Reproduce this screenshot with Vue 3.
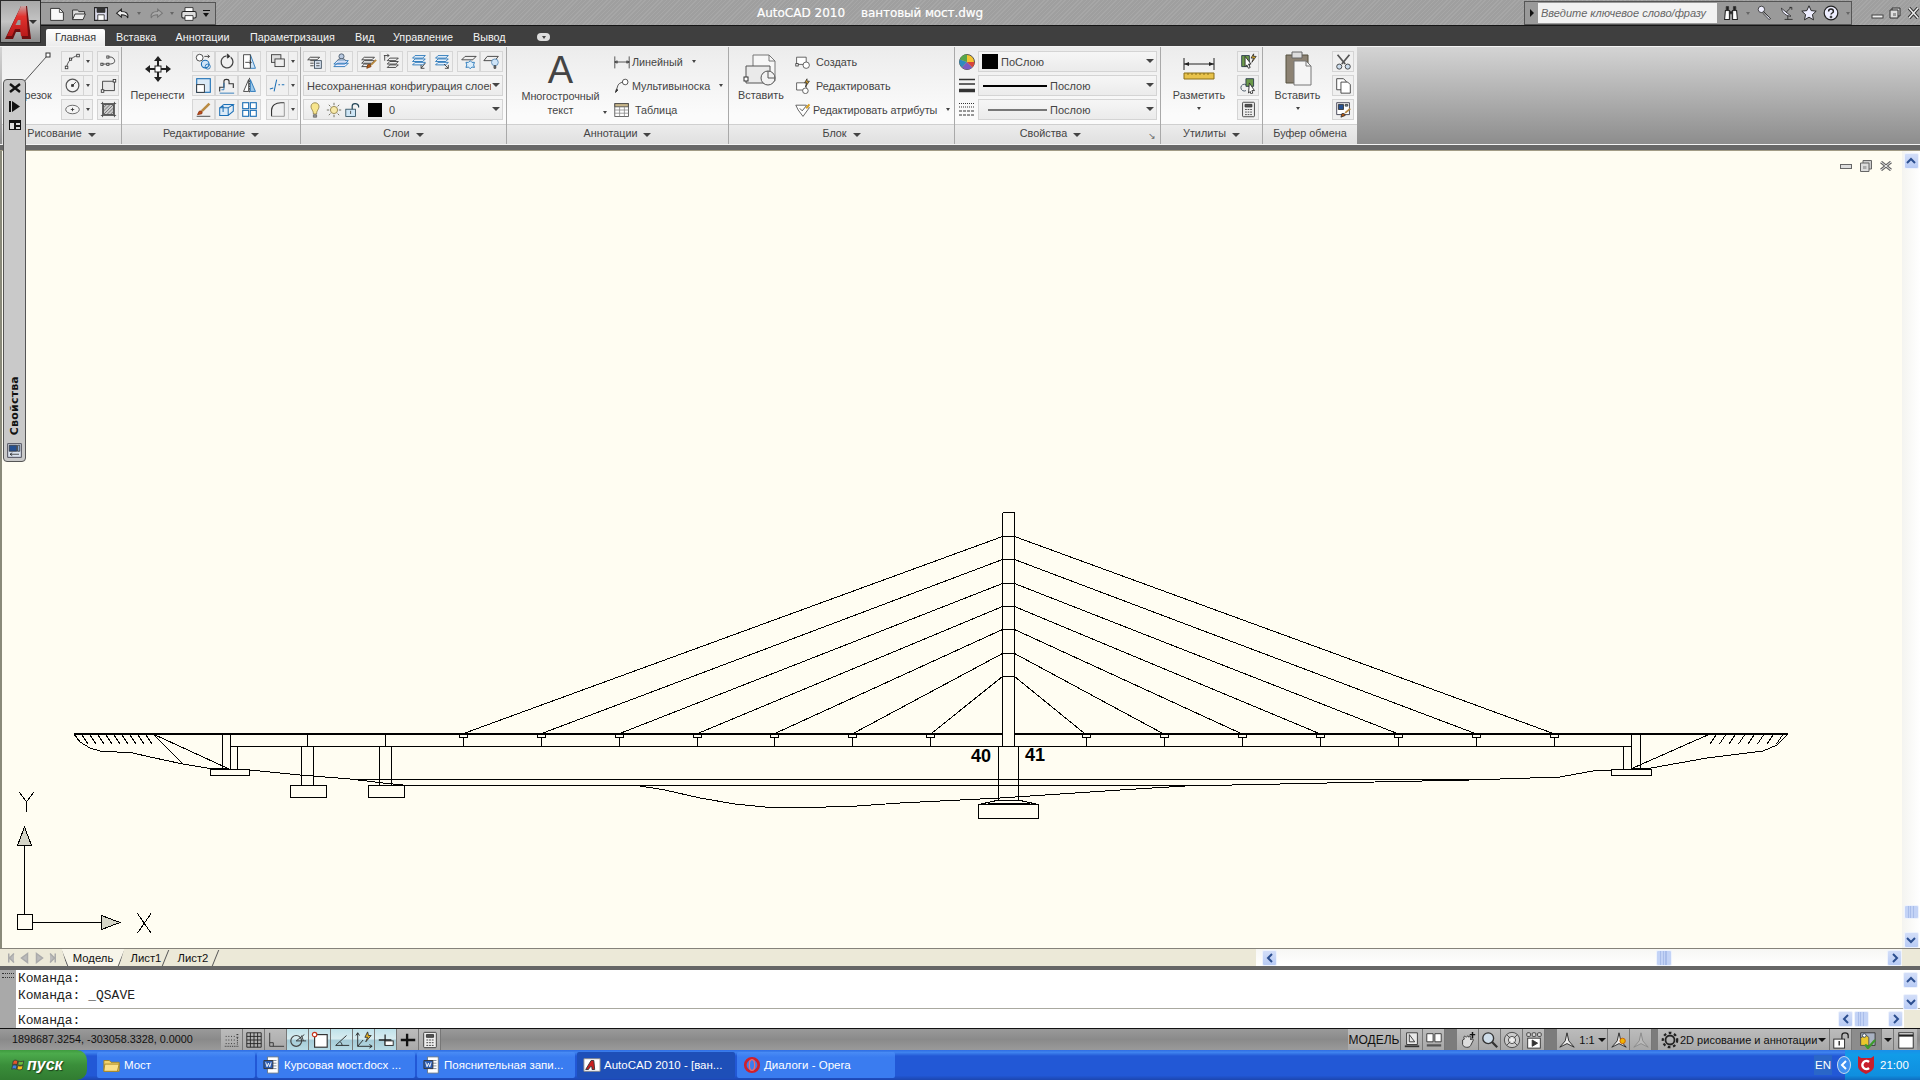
<script setup>
const D = {
  arc: '<path d="M3 17C4 10 9 5 16 3"/><rect x="1.5" y="15.5" width="3" height="3" fill="#fff"/><rect x="15" y="1.5" width="3" height="3" fill="#fff"/><rect x="6.5" y="6" width="2.5" height="2.5" fill="#fff"/>',
  circle: '<circle cx="10" cy="10" r="7.5" stroke="#555" stroke-width="1.4" fill="#f4f4f4"/><path d="M10 10l4-4"/><rect x="9" y="9" width="2" height="2" fill="#222"/>',
  ellipse: '<ellipse cx="10" cy="10" rx="8" ry="5" stroke="#555" fill="#f4f4f4"/><path d="M8 10h4M10 8v4"/>',
  pline: '<path d="M2 13h9c5 0 7-2 6-5s-5-4-8-3"/><rect x="1" y="12" width="2.5" height="2.5" fill="#fff"/><rect x="8" y="12" width="2.5" height="2.5" fill="#fff"/><rect x="8" y="3.5" width="2.5" height="2.5" fill="#fff"/>',
  rect: '<path d="M3 5h14v11H3z" fill="#e8e8e8"/><rect x="15.5" y="3" width="3" height="3" fill="#fff"/><rect x="1.5" y="15" width="3" height="3" fill="#fff"/>',
  hatch: '<path d="M4 4h12v12H4z" fill="#ccc"/><path d="M4 8l4-4M4 12l8-8M4 16L16 4M8 16l8-8M12 16l4-4" stroke="#666"/><path d="M1 3h18M1 17h18M3 1v18M17 1v18" stroke="#444"/>',
  copy: '<circle cx="5.5" cy="5.5" r="4" fill="#fff"/><circle cx="12" cy="13" r="4.5" fill="#cfe4f7" stroke="#1c6fb5" stroke-width="1.3"/><circle cx="15" cy="16" r="3" stroke="#1c6fb5"/><path d="M11 4h6l-2-2M17 4l-2 2"/>',
  rot: '<path d="M15 5a7 7 0 1 1-5-1.5" stroke-width="1.5" stroke="#444"/><path d="M11 1v5l3-2z" fill="#222"/>',
  trim: '<path d="M11 2l6 16h-6z" fill="#cfe4f7" stroke="#1c6fb5"/><path d="M3 2h8v16H3z" fill="#fff"/><path d="M5 11h7M10 9l2 2-2 2"/>',
  scale: '<rect x="2" y="2" width="16" height="16" fill="#dbeaf7" stroke="#1c6fb5" stroke-width="1.3"/><rect x="2" y="9" width="9" height="9" fill="#fff" stroke="#222"/>',
  stretch: '<path d="M2 17v-5h5V5c0-3 6-3 6 0v3h5v5" stroke-width="1.3"/><path d="M2 19h17" stroke="#1c6fb5"/><path d="M4 15h3V7" stroke="#1c6fb5"/>',
  mirror: '<path d="M9 3L3 17h6z" fill="#fff"/><path d="M11 3l6 14h-6z" fill="#9cc8ea" stroke="#1c6fb5"/><path d="M10 1v18" stroke-dasharray="2 1"/>',
  brush: '<path d="M2 18h16" stroke="#333"/><path d="M17 3L8 12" stroke="#b98a42" stroke-width="3"/><path d="M5 12c3-1 4 1 3 3l-5 1z" fill="#c24f17" stroke="#8a3010"/>',
  box: '<path d="M2 8h10v9H2zM2 8l5-4h11l-6 4M12 17l6-5V4M6 4v9" stroke="#1c6fb5" stroke-width="1.2" fill="#dbeaf7"/>',
  array: '<rect x="2" y="2" width="7" height="7" stroke="#1c6fb5" stroke-width="1.3" fill="#fff"/><rect x="11" y="2" width="7" height="7" stroke="#1c6fb5" stroke-width="1.3" fill="#fff"/><rect x="2" y="11" width="7" height="7" stroke="#1c6fb5" stroke-width="1.3" fill="#fff"/><rect x="11" y="11" width="7" height="7" stroke="#1c6fb5" stroke-width="1.3" fill="#fff"/>',
  stack: '<rect x="3" y="2" width="11" height="9" fill="#ddd"/><rect x="7" y="7" width="11" height="9" fill="#eee"/>',
  brk: '<path d="M1 14l4-1M6 17L9 3" stroke="#1c6fb5" stroke-width="1.2"/><path d="M11 9h2M15 9h3" stroke="#1c6fb5" stroke-width="1.2"/>',
  fillet: '<path d="M3 18V11C3 5 8 2 14 2h4" stroke-width="1.3"/><path d="M3 18h15V2" stroke="#888"/>',
  lay1: '<path d="M5 5h11l-3 3H2zM5 9h8M5 12h4M5 15h4"/><rect x="10" y="9" width="8" height="9" fill="#dbe6f4" stroke="#345"/><path d="M12 12h4M12 15h4"/>',
  lay2: '<path d="M5 12h13l-4 4H1zM5 9h13l-4 4H1z" stroke="#1c6fb5" fill="#eef"/><circle cx="10" cy="4" r="3" fill="#b8c8e0" stroke="#456"/><path d="M5 9c1-3 9-3 10 0" stroke="#456" fill="#b8c8e0"/>',
  lay3: '<path d="M5 5h12l-3 3H2zM5 9h12l-3 3H2zM5 13h8l-3 3H2z"/><path d="M19 8l-6 6" stroke="#b98a42" stroke-width="2.2"/><path d="M9 14c2-1 4 0 4 2l-5 2z" fill="#b85a12" stroke="#7a3a08"/>',
  lay4: '<path d="M8 6h10l-3 3H5zM8 10h10l-3 3H5zM8 14h10l-3 3H5z"/><path d="M1 3h6l-2-2M7 3L5 5"/><path d="M2 3v6"/>',
  lay5: '<path d="M6 3h12l-3 3H3zM6 7h12l-3 3H3z" stroke="#1c6fb5" fill="#e8f1fb"/><path d="M6 11h12l-3 3H3z" stroke="#1c6fb5" fill="#e8f1fb"/><path d="M18 12l-5 6M13 14v4h4"/>',
  lay6: '<path d="M6 3h12l-3 3H3zM6 7h12l-3 3H3zM6 11h12l-3 3H3z" stroke="#1c6fb5" fill="#e8f1fb"/><path d="M13 13l5 5M18 14v4h-4"/>',
  lay7: '<path d="M6 4h13l-4 4H2z"/><path d="M12 9l2 2h3l-1 3 1 3-3-.5-2 2-2-2-3 .5 1-3-1-3h3z" fill="#dceefb" stroke="#1c6fb5"/>',
  lay8: '<path d="M5 4h13l-4 5H1z"/><circle cx="14" cy="11" r="4" fill="#cfe4f7" stroke="#5a8ab5"/><path d="M13 15h2v3h-2z" fill="#999"/>',
  bulb: '<path d="M10 1C5 1 4 6 6 9c1 2 2 3 2 6h4c0-3 1-4 2-6 2-3 1-8-4-8z" fill="#f7e58d" stroke="#8a7a40"/><path d="M8 16h4v3H8z" fill="#999" stroke="#666"/>',
  sun: '<circle cx="10" cy="10" r="4.5" fill="#f7e9a8" stroke="#8a7a40"/><path d="M10 1v3M10 16v3M1 10h3M16 10h3M3.5 3.5l2 2M14.5 14.5l2 2M3.5 16.5l2-2M14.5 5.5l2-2" stroke="#554"/>',
  lockb: '<rect x="1" y="9" width="12" height="9" fill="#cfe6f5" stroke="#245"/><path d="M7 11v4"/><path d="M9 9V5c0-4 7-4 8 0v2" stroke="#245" stroke-width="1.5"/>',
  bind: '<path d="M3 7h5v11H2zM12 7h5l1 11h-6z" fill="#fff" stroke="#222" stroke-width="1.3"/><path d="M4 2h3v5H4zM13 2h3v5h-3zM8 8h4v3H8z" fill="#222"/>',
  key: '<circle cx="5.5" cy="5.5" r="4" fill="#eef" stroke="#222"/><path d="M8 8l9 9M17 17l-2 1-8-8" stroke="#222" fill="#eef"/>',
  dish: '<path d="M3 4c1 6 6 10 12 10z" fill="#eef" stroke="#222"/><path d="M9 9l6-6M13 3h3v3M7 18h10M11 13v5" stroke="#222"/>',
  star: '<path d="M10 1l2.7 6 6.3.7-4.7 4.3 1.3 6.5L10 15.2 4.4 18.5 5.7 12 1 7.7 7.3 7z" fill="#eef" stroke="#222" stroke-width="1.2"/>',
  help: '<circle cx="10" cy="10" r="8.5" fill="#eef" stroke="#222" stroke-width="1.5"/><path d="M7 8c0-4 6-4 6 0 0 2-3 2-3 4" stroke="#222" stroke-width="1.8"/><path d="M9 14h2v2H9z" fill="#222"/>',
  newf: '<path d="M2 3h11l5 5v10H2z" fill="#f8f8f8" stroke="#333" stroke-width="1.2"/><path d="M13 3v5h5" stroke="#333"/>',
  open: '<path d="M2 17V5h6l2 2h7v3" fill="#ddd" stroke="#333" stroke-width="1.2"/><path d="M2 17l3-7h13l-3 7z" fill="#eee" stroke="#333" stroke-width="1.2"/>',
  save: '<path d="M2 2h16v16H2z" fill="#dde" stroke="#222" stroke-width="1.4"/><path d="M5 2h10v6H5z" fill="#333"/><path d="M6 11h8v7H6z" fill="#fff" stroke="#222"/>',
  undo: '<path d="M8 4L2 9l6 5v-3c5 0 7 1 8 4 1-6-2-8-8-8z" fill="#eee" stroke="#222" stroke-width="1.3"/>',
  redo: '<path d="M12 4l6 5-6 5v-3c-5 0-7 1-8 4-1-6 2-8 8-8z" fill="#aaa" stroke="#777" stroke-width="1.3"/>',
  print: '<path d="M5 2h10v5H5z" fill="#fff" stroke="#222"/><rect x="1" y="7" width="18" height="8" rx="2" fill="#ddd" stroke="#222" stroke-width="1.3"/><path d="M5 12h10v6H5z" fill="#fff" stroke="#222"/>',
  ic1: '<path d="M2 3h9v13H2z" fill="#6c9a4a" stroke="#234"/><path d="M6 4l7 9-3 0 2 4-2 1-2-4-2 2z" fill="#fff" stroke="#222"/><path d="M16 1l-3 5h3l-2 5 5-7h-3z" fill="#e7b321"/>',
  ic2: '<path d="M7 2h9v9H7z" fill="#6c9a4a" stroke="#234"/><path d="M7 9a4 4 0 1 0 0 7" stroke="#345"/><path d="M11 7l6 9-3 0 1 3-2 1-1-3-2 2z" fill="#fff" stroke="#222"/>',
  calc: '<rect x="3" y="1.5" width="14" height="17" rx="1" fill="#eee" stroke="#333"/><path d="M6 4h8v3H6z" fill="#555"/><path d="M6 10h2M9 10h2M12 10h2M6 13h2M9 13h2M12 13h2M6 16h2M9 16h2M12 16h2" stroke="#333"/>',
  cut: '<path d="M3 2l9 11M17 2L8 13" stroke="#555" stroke-width="2"/><circle cx="5" cy="16" r="3" fill="#cde" stroke="#333"/><circle cx="15" cy="16" r="3" fill="#cde" stroke="#333"/>',
  cp: '<path d="M2 2h8l3 3v10H2z" fill="#fff" stroke="#333"/><path d="M7 6h8l3 3v10H7z" fill="#fff" stroke="#333"/>',
  pasted: '<path d="M2 2h15v14H2z" fill="#fff" stroke="#334"/><path d="M4 4h6v6H4z" fill="#244f90"/><path d="M12 4h3v2h-3z" fill="#8ab"/><path d="M18 9l-6 5" stroke="#b98a42" stroke-width="2.2"/><path d="M8 15c2-1 4 0 4 2l-5 2z" fill="#b85a12"/>',
  ssnap: '<path d="M3 6h1M6 6h1M9 6h1M12 6h1M3 10h1M6 10h1M9 10h1M12 10h1M3 14h1M6 14h1M9 14h1M12 14h1M15 4h2M15 7h2" stroke="#222"/><path d="M16 8v8M2 17h15" stroke="#222" stroke-dasharray="1 1"/>',
  sgrid: '<path d="M2 2h16v16H2zM2 6h16M2 10h16M2 14h16M6 2v16M10 2v16M14 2v16" stroke="#222"/>',
  sortho: '<path d="M3 2v15h16" stroke="#333"/><path d="M3 13h4v4" stroke="#333"/>',
  spolar: '<circle cx="8" cy="11" r="6" stroke="#444" stroke-width="1.3"/><path d="M8 11l9-7M8 11h11M14 5l2 6" stroke="#333"/>',
  sosnap: '<rect x="4" y="4" width="14" height="14" fill="#fff" stroke="#333" stroke-width="1.3"/><circle cx="4" cy="4" r="2.5" fill="#fff" stroke="#c8341b" stroke-width="1.3"/>',
  sotrack: '<path d="M3 16h15M3 16L15 5M10 16c0-2-1-3-2-4" stroke="#222"/>',
  sducs: '<path d="M3 2v15h16M1 5l2-3 2 3M16 15l3 2-3 2M3 17l6-7" stroke="#222"/><path d="M14 1l-3 6h3l-2 5 6-7h-3z" fill="#e7b321"/>',
  sdyn: '<path d="M2 10h14M9 4v12" stroke="#222" stroke-width="1.4"/><rect x="9" y="11" width="9" height="5" fill="#fff" stroke="#222"/>',
  slwt: '<path d="M2 10h16M9 3v14" stroke="#111" stroke-width="2.6"/>',
  spaper: '<path d="M4 2h12v13H4z" fill="#e8e8e8"/><path d="M7 12V4l6 8z"/><path d="M2 17h16" stroke-width="2"/>',
  sviews: '<path d="M2 3h7v9H2zM11 3h7v9h-7z" fill="#fff"/><path d="M2 16h16" stroke-width="2.5" stroke="#555"/>',
  span2: '<path d="M4 10v5c1 4 8 4 9 1l3-6c0-2-3-1-3 0V7c0-2-2-2-2 0 0-2-2-2-3 0l-1-1C5 5 5 8 6 9z" fill="#ddd" stroke="#333"/><path d="M15 1v7M12 4h6" stroke="#111" stroke-width="1.6"/>',
  szoom: '<circle cx="8" cy="8" r="6" fill="#cfdde9" stroke="#333" stroke-width="1.5"/><path d="M12 12l6 6" stroke="#333" stroke-width="2.5"/>',
  swheel: '<circle cx="10" cy="10" r="8.5" fill="#ccc" stroke="#444"/><circle cx="10" cy="10" r="4" fill="#eee" stroke="#444"/><path d="M4 4l4 4M16 4l-4 4M4 16l4-4M16 16l-4-4" stroke="#444"/>',
  sshow: '<rect x="2" y="2" width="4" height="4" rx="1" fill="#ddd" stroke="#333"/><rect x="8" y="2" width="4" height="4" rx="1" fill="#ddd" stroke="#333"/><rect x="14" y="2" width="4" height="4" rx="1" fill="#ddd" stroke="#333"/><rect x="3" y="8" width="14" height="11" fill="#fff" stroke="#333"/><path d="M8 10l6 3.5-6 3.5z" fill="#333"/>',
  sanno: '<path d="M10 2l2 9 6 7-8-4-8 4 6-7z" fill="#eee" stroke="#222"/>',
  sanno2: '<path d="M10 2l2 9 6 7-8-4-8 4 6-7z" fill="#eee" stroke="#222"/><circle cx="14" cy="11" r="3" fill="#f0b400" stroke="#c75c00"/>',
  sanno3: '<path d="M10 2l2 9 6 7-8-4-8 4 6-7z" fill="#bbb" stroke="#888"/>',
  gear: '<circle cx="10" cy="10" r="5" fill="none" stroke="#222" stroke-width="2"/><circle cx="10" cy="10" r="8" fill="none" stroke="#222" stroke-width="2.5" stroke-dasharray="3 3"/>',
  lock2: '<rect x="2" y="9" width="12" height="10" fill="#fff" stroke="#222"/><path d="M8 11v5" stroke="#222" stroke-width="1.5"/><path d="M11 9V5c0-4 7-4 7 0v3" stroke="#222" stroke-width="1.4"/>',
  cui: '<path d="M3 2h16v14H3z" fill="#a9b2c2"/><path d="M3 8l5-4 4 3v9H3z" fill="#eac72c" stroke="#555"/><path d="M8 15l3 4 8-9" stroke="#3d9a2c" stroke-width="2.5"/><circle cx="7" cy="5" r="2" fill="#fff" stroke="#345"/>',
  win: '<rect x="2" y="2" width="16" height="17" fill="#fff" stroke="#222"/><path d="M2 5h16" stroke="#222" stroke-width="2.5"/>',
  folder: '<path d="M1 5h6l2 2h9v10H1z" fill="#f3d36b" stroke="#a58320"/><path d="M2 9h16l-2 8H1z" fill="#fbe08a" stroke="#a58320"/>',
  word: '<path d="M5 1h12v18H5z" fill="#fff" stroke="#678"/><path d="M8 5h7M8 8h7M8 11h7M8 14h7" stroke="#789"/><path d="M1 5h10v9H1z" fill="#2b5cb0"/><path d="M3 7l1.5 5L6 8l1.5 4L9 7" stroke="#fff"/>',
  acad: '<path d="M1 3h18v14H1z" fill="#fff" stroke="#888"/><path d="M3 15L9 5h3l1 10h-3v-3H8l-2 3z" fill="#c91f1f"/>',
  opera: '<circle cx="10" cy="10" r="7.5" fill="none" stroke="#d0202b" stroke-width="3"/><ellipse cx="10" cy="10" rx="3" ry="6" fill="none" stroke="#f06a6a" stroke-width="1.5"/>',
  flag: '<path d="M3 4c3-2 4-1 6 0l-1 5c-2-1-4-1-6 0z" fill="#e8562a"/><path d="M10 4c2 1 4 1 7 0l-1 5c-3 1-5 1-7 0z" fill="#6cbb3c"/><path d="M2 10c2-1 4-1 6 0l-1 5c-2-1-4-1-6 0z" fill="#3f83e0"/><path d="M9 10c2 1 4 1 7 0l-1 5c-3 1-5 1-7 0z" fill="#f5c21f"/>',
  propb: '<rect x="1" y="1" width="18" height="18" fill="#dbe3ee" stroke="#223"/><path d="M3 3h10v8H3z" fill="#244f90"/><path d="M14 3h3v8h-3z" fill="#88a8d0"/><path d="M4 15h12M4 15l3-2M4 15l3 2" stroke="#222"/>'
}

const drawCol1 = ['arc', 'circle', 'ellipse']
const drawCol2 = ['pline', 'rect', 'hatch']
const editGrid = ['copy', 'rot', 'trim', 'scale', 'stretch', 'mirror', 'brush', 'box', 'array']
const editSplit = ['stack', 'brk', 'fillet']
const layerGroups = [['lay1'], ['lay2'], ['lay3', 'lay4'], ['lay5', 'lay6'], ['lay7', 'lay8']]
const annotRows = [
  { t: 'Линейный', dd: true, i: '<path d="M1 3v15M19 3v15M1 10h18M1 10l3-1.5v3zM19 10l-3-1.5v3z" stroke="#333"/>' },
  { t: 'Мультивыноска', dd: true, i: '<path d="M2 18l3-9c1-2 3-3 6-4" stroke="#333"/><circle cx="14" cy="5" r="3.5" fill="#fff" stroke="#333"/><path d="M2 18l1-4 2 1z" fill="#333"/>' },
  { t: 'Таблица', dd: false, wide: true, i: '<rect x="1" y="2" width="17" height="16" fill="#fff" stroke="#444"/><path d="M1 2h17v4H1z" fill="#c8b68a" stroke="#444"/><path d="M1 10h17M1 14h17M7 6v12M13 6v12" stroke="#888"/>' }
]
const blockRows = [
  { t: 'Создать', dd: false, wide: true, i: '<path d="M2 4h12v9H2z" fill="#fff" stroke="#444"/><rect x="1" y="12" width="3" height="3" fill="#fff" stroke="#333"/><circle cx="14" cy="14" r="4" fill="#fff" stroke="#444"/>' },
  { t: 'Редактировать', dd: false, wide: true, i: '<path d="M2 6h12v9H2z" fill="#fff" stroke="#444"/><circle cx="13" cy="16" r="3.5" fill="#fff" stroke="#444"/><path d="M15 1l-3 5h3l-2 5 5-7h-3z" fill="#e7a921"/>' },
  { t: 'Редактировать атрибуты', dd: true, i: '<path d="M1 4h13l4 3-8 11-6-8z" fill="#fff" stroke="#444"/><path d="M6 8l3 3 5-6" stroke="#333"/><path d="M18 3l-4 5" stroke="#d8a020" stroke-width="2.5"/>' }
]

const statusLeft = [
  ['ssnap', false], ['sgrid', false], ['sortho', false], ['spolar', true], ['sosnap', true],
  ['sotrack', true], ['sducs', true], ['sdyn', true], ['slwt', false], ['calc', false]
]
const navBtn = ['M9 3v12M16 3l-6 6 6 6', 'M14 3L6 9l8 6z', 'M6 3l8 6-8 6z', 'M4 3l6 6-6 6M11 3v12']
const tasks = [
  { t: 'Мост', i: 'folder' },
  { t: 'Курсовая мост.docx ...', i: 'word' },
  { t: 'Пояснительная запи...', i: 'word' },
  { t: 'AutoCAD 2010 - [ван...', i: 'acad', on: true },
  { t: 'Диалоги - Opera', i: 'opera' }
]

/* Drawing */
const towerL = 1002.5, towerR = 1014.5
const levels = [536.5, 559.5, 583.5, 606.5, 629.5, 653.5, 676.5]
const leftA = [463, 541, 619, 697, 774, 852, 930]
const rightA = [1554, 1476, 1398, 1320, 1242, 1164, 1086]
const cables = []
levels.forEach((y, i) => {
  cables.push([towerL, y, leftA[i] + 2, 733])
  cables.push([towerR, y, rightA[i] - 2, 733])
})
const anchors = [...leftA, ...rightA]
const hatchL = Array.from({ length: 9 }, (_, i) => 82 + i * 8)
const hatchR = Array.from({ length: 8 }, (_, i) => 1710 + i * 9.5)
const ground = [
  [74, 734], [80, 742], [90, 748], [100, 751], [133, 753], [150, 757], [183, 764], [207, 768], [250, 770],
  [300, 775], [350, 779], [383, 783], [403, 785], [640, 786], [665, 790], [700, 798], [735, 804], [765, 807], [796, 808], [857, 806],
  [900, 803], [1000, 798], [1120, 790], [1185, 786], [1470, 780], [1560, 777], [1593, 771], [1651, 768],
  [1707, 758], [1763, 751], [1777, 745], [1788, 734]
].map(p => p.join(',')).join(' ')
</script>

<template>
  <div class="app">
    <div class="appbtn">
      <svg width="34" height="36" viewBox="0 0 34 36">
        <defs>
          <linearGradient id="logoA" x1="0" y1="0" x2="0" y2="1">
            <stop offset="0" stop-color="#c9a3a3" />
            <stop offset=".35" stop-color="#e2322e" />
            <stop offset="1" stop-color="#b81a1a" />
          </linearGradient>
        </defs>
        <path d="M1 35L17 2h6l4 33h-9l-1-7h-5l-3 7z" fill="#6e0e0f" />
        <path d="M3 32L17 2h5l2 30h-7l-1-7h-5l-3 7z" fill="url(#logoA)" />
        <path d="M14 16h2.500v5H11.500z" fill="#9a9a9a" />
      </svg>
      <i class="tri white appcaret"></i>
    </div>

    <header class="titlebar">
      <div class="qat">
        <svg class="ic q" viewBox="0 0 20 20" v-html="D.newf"></svg>
        <svg class="ic q" viewBox="0 0 20 20" v-html="D.open"></svg>
        <svg class="ic q" viewBox="0 0 20 20" v-html="D.save"></svg>
        <svg class="ic q" viewBox="0 0 20 20" v-html="D.undo"></svg><i class="tri small g"></i>
        <svg class="ic q" viewBox="0 0 20 20" v-html="D.redo"></svg><i class="tri small g"></i>
        <svg class="ic q" viewBox="0 0 20 20" v-html="D.print"></svg>
        <span class="qmore"></span>
      </div>
      <div class="title"><span>AutoCAD 2010</span><span>вантовый мост.dwg</span></div>
      <div class="search">
        <i class="tri-r"></i>
        <div class="input">Введите ключевое слово/фразу</div>
        <svg class="ic s" viewBox="0 0 20 20" v-html="D.bind"></svg><i class="tri small g"></i>
        <svg class="ic s" viewBox="0 0 20 20" v-html="D.key"></svg>
        <svg class="ic s" viewBox="0 0 20 20" v-html="D.dish"></svg>
        <svg class="ic s" viewBox="0 0 20 20" v-html="D.star"></svg>
        <svg class="ic s" viewBox="0 0 20 20" v-html="D.help"></svg><i class="tri small g"></i>
      </div>
      <div class="winbtns">
        <svg class="wmin" width="14" height="12" viewBox="0 0 14 12"><rect x="1" y="8" width="11" height="3" fill="#eee" stroke="#444" /></svg>
        <svg width="12" height="12" viewBox="0 0 12 12"><path d="M3 1h8v8H3z" fill="#ccc" stroke="#333" /><path d="M1 3h8v8H1z" fill="#ddd" stroke="#333" /><path d="M4 6h3v3H4z" fill="#999" /></svg>
        <svg width="11" height="12" viewBox="0 0 11 12"><path d="M1 1l9 10M10 1L1 11" stroke="#333" stroke-width="3.5" /><path d="M1 1l9 10M10 1L1 11" stroke="#eee" stroke-width="1.5" /></svg>
      </div>
    </header>

    <nav class="tabs">
      <span class="tab on">Главная</span>
      <span class="tab t1">Вставка</span>
      <span class="tab t2">Аннотации</span>
      <span class="tab t3">Параметризация</span>
      <span class="tab t4">Вид</span>
      <span class="tab t5">Управление</span>
      <span class="tab t6">Вывод</span>
      <span class="pill"><i class="tri small d"></i></span>
    </nav>

    <section class="ribbon">
      <div class="panel p1">
        <div class="body">
          <div class="big w58">
            <svg class="bigicon" width="58" height="38" viewBox="0 0 58 38">
              <path d="M20 32L44 5" stroke="#555" fill="none" />
              <rect x="43" y="2" width="4" height="4" fill="#fff" stroke="#333" />
            </svg>
            <span class="biglabel">Отрезок</span>
          </div>
          <div class="col">
            <span v-for="c in drawCol1" :key="c" class="split">
              <span class="ib"><svg class="ic" viewBox="0 0 20 20" v-html="D[c]"></svg></span>
              <span class="ar"><i class="tri small d"></i></span>
            </span>
          </div>
          <div class="col ml4">
            <span v-for="c in drawCol2" :key="c" class="ib solo"><svg class="ic" viewBox="0 0 20 20" v-html="D[c]"></svg></span>
          </div>
        </div>
        <div class="ptitle">Рисование <i class="tri d"></i></div>
      </div>

      <div class="panel p2">
        <div class="body">
          <div class="big w70">
            <svg class="bigicon" width="40" height="38" viewBox="0 2 40 38">
              <path d="M20 7l-4 5h3v5h2v-5h3zM20 33l-4-5h3v-5h2v5h3zM7 20l5-4v3h5v2h-5v3zM33 20l-5-4v3h-5v2h5v3z" fill="#222" />
              <rect x="17" y="17" width="6" height="6" fill="#fff" stroke="#222" />
            </svg>
            <span class="biglabel">Перенести</span>
          </div>
          <div class="g3">
            <span v-for="n in editGrid" :key="n" class="ib flat"><svg class="ic" viewBox="0 0 20 20" v-html="D[n]"></svg></span>
          </div>
          <div class="col ml4">
            <span v-for="n in editSplit" :key="n" class="split">
              <span class="ib"><svg class="ic" viewBox="0 0 20 20" v-html="D[n]"></svg></span>
              <span class="ar"><i class="tri small d"></i></span>
            </span>
          </div>
        </div>
        <div class="ptitle">Редактирование <i class="tri d"></i></div>
      </div>

      <div class="panel p3">
        <div class="body stack">
          <div class="lrow">
            <span v-for="(g, i) in layerGroups" :key="i" class="lgrp">
              <span v-for="n in g" :key="n" class="ib lay"><svg class="ic" viewBox="0 0 20 20" v-html="D[n]"></svg></span>
            </span>
          </div>
          <div class="combo w200"><span class="ctext">Несохраненная конфигурация слоев</span><i class="tri d"></i></div>
          <div class="combo w200">
            <svg class="ic s16" viewBox="0 0 20 20" v-html="D.bulb"></svg>
            <svg class="ic s16" viewBox="0 0 20 20" v-html="D.sun"></svg>
            <svg class="ic s16" viewBox="0 0 20 20" v-html="D.lockb"></svg>
            <span class="swatch sm"></span>
            <span class="ctext z">0</span>
            <i class="tri d"></i>
          </div>
        </div>
        <div class="ptitle">Слои <i class="tri d"></i></div>
      </div>

      <div class="panel p4">
        <div class="body">
          <div class="big w106">
            <span class="biga">A</span>
            <span class="biglabel two">Многострочный<br />текст</span>
            <i class="tri small d mt-a"></i>
          </div>
          <div class="rows">
            <div v-for="r in annotRows" :key="r.t" class="trow" :class="{ wide: r.wide }">
              <svg class="ic s16" viewBox="0 0 20 20" v-html="r.i"></svg>
              <span>{{ r.t }}</span><i v-if="r.dd" class="tri small d gap8"></i>
            </div>
          </div>
        </div>
        <div class="ptitle">Аннотации <i class="tri d"></i></div>
      </div>

      <div class="panel p5">
        <div class="body">
          <div class="big w64">
            <svg class="bigicon" width="36" height="38" viewBox="0 0 36 38">
              <path d="M10 4h16l6 6v20H10z" fill="#f7f7f7" stroke="#777" />
              <path d="M26 4v6h6" fill="none" stroke="#777" />
              <path d="M3 15h24v17H3z" fill="#eaeaea" stroke="#555" />
              <rect x="1" y="26" width="4" height="4" fill="#fff" stroke="#333" />
              <circle cx="25" cy="27" r="7" fill="#f2f2f2" stroke="#555" />
              <path d="M25 20v7h7" fill="none" stroke="#555" />
            </svg>
            <span class="biglabel">Вставить</span>
          </div>
          <div class="rows ml2">
            <div v-for="r in blockRows" :key="r.t" class="trow" :class="{ wide: r.wide }">
              <svg class="ic s16" viewBox="0 0 20 20" v-html="r.i"></svg>
              <span>{{ r.t }}</span><i v-if="r.dd" class="tri small d gap8"></i>
            </div>
          </div>
        </div>
        <div class="ptitle">Блок <i class="tri d"></i></div>
      </div>

      <div class="panel p6">
        <div class="body stack">
          <div class="prow">
            <svg class="wheel" width="16" height="16" viewBox="0 0 16 16">
              <circle cx="8" cy="8" r="7.5" fill="#f4c430" stroke="#555" />
              <path d="M8 8V.5A7.5 7.5 0 0 0 .9 5.5z" fill="#57a64a" />
              <path d="M8 8L.9 5.5A7.5 7.5 0 0 0 3 13.6z" fill="#2d8bc0" />
              <path d="M8 8l-5 5.6a7.5 7.5 0 0 0 10.4-.3z" fill="#7a5bc2" />
              <path d="M8 8l5.4 5.3A7.5 7.5 0 0 0 15.4 8z" fill="#d8453c" />
            </svg>
            <div class="combo w179"><span class="swatch"></span><span class="ctext t">ПоСлою</span><i class="tri d"></i></div>
          </div>
          <div class="prow">
            <svg class="wheel" width="16" height="16" viewBox="0 0 16 16"><path d="M0 1.5h16M0 6h16" stroke="#333" stroke-width="1.5" /><path d="M0 12.5h16" stroke="#333" stroke-width="3.5" /></svg>
            <div class="combo w179"><span class="lw black"></span><span class="ctext t">Послою</span><i class="tri d"></i></div>
          </div>
          <div class="prow">
            <svg class="wheel" width="16" height="16" viewBox="0 0 16 16"><path d="M0 1.5h16M0 5h16" stroke="#333" stroke-dasharray="1 1" /><path d="M0 9h16M0 13h16" stroke="#333" stroke-dasharray="3 1" /></svg>
            <div class="combo w179"><span class="lw graya"></span><span class="ctext t">Послою</span><i class="tri d"></i></div>
          </div>
        </div>
        <div class="ptitle pad24">Свойства <i class="tri d"></i><span class="launch">↘</span></div>
      </div>

      <div class="panel p7">
        <div class="body">
          <div class="big w76">
            <svg class="bigicon" width="34" height="38" viewBox="0 0 34 38">
              <path d="M2 7v12M32 7v12M2 13h30" stroke="#222" fill="none" />
              <path d="M2 13l5-2v4zM32 13l-5-2v4z" fill="#222" />
              <path d="M2 22h30v6H2z" fill="#e8c24a" stroke="#8a6f18" />
              <path d="M6 22v2M10 22v2M14 22v2M18 22v2M22 22v2M26 22v2" stroke="#8a6f18" />
            </svg>
            <span class="biglabel">Разметить</span>
            <i class="tri small d"></i>
          </div>
          <div class="col">
            <span v-for="n in ['ic1', 'ic2', 'calc']" :key="n" class="ib solo"><svg class="ic" viewBox="0 0 20 20" v-html="D[n]"></svg></span>
          </div>
        </div>
        <div class="ptitle">Утилиты <i class="tri d"></i></div>
      </div>

      <div class="panel p8">
        <div class="body">
          <div class="big w69">
            <svg class="bigicon" width="30" height="38" viewBox="0 0 30 38">
              <path d="M3 4h22v28H3z" fill="#8c8273" stroke="#55503f" />
              <path d="M9 1h10v6H9z" fill="#ddd" stroke="#666" />
              <path d="M11 10h12l5 5v19H11z" fill="#f5f5f5" stroke="#777" />
              <path d="M23 10v5h5" fill="none" stroke="#777" />
            </svg>
            <span class="biglabel">Вставить</span>
            <i class="tri small d"></i>
          </div>
          <div class="col">
            <span v-for="n in ['cut', 'cp', 'pasted']" :key="n" class="ib solo"><svg class="ic" viewBox="0 0 20 20" v-html="D[n]"></svg></span>
          </div>
        </div>
        <div class="ptitle plain">Буфер обмена</div>
      </div>
    </section>
    <div class="ribbon-sep"></div>

    <aside class="palette">
      <svg width="12" height="10" viewBox="0 0 12 10"><path d="M1 1l10 8M11 1L1 9" stroke="#111" stroke-width="2.4" /></svg>
      <svg width="11" height="11" viewBox="0 0 11 11"><path d="M0 0h2v11H0zM3 0l8 5.5L3 11z" fill="#111" /></svg>
      <svg width="12" height="10" viewBox="0 0 12 10"><path d="M0 0h12v10H0z" fill="#111" /><path d="M1 3h4v6H1zM7 3h4v2H7zM7 7h4v2H7z" fill="#ddd" /></svg>
      <span class="pal-grow"></span>
      <span class="pal-text">Свойства</span>
      <svg class="ic pal-ic" viewBox="0 0 20 20" v-html="D.propb"></svg>
    </aside>

    <main class="canvas">
      <div class="drawing">
        <svg class="dwg" width="1900" height="797" viewBox="2 151 1900 797" shape-rendering="crispEdges" fill="none" stroke="#000">
          <path d="M74 733.5H1002M1014 733.5H1788" stroke-width="2" />
          <path d="M230 746.5H1631" />
          <path d="M352 779.5H1470M403 785.5H1185" />
          <polyline :points="ground" />
          <path d="M1002.5 512.5H1014.5V746M1002.5 512.5V746" />
          <path v-for="y in levels" :key="y" :d="`M1002.5 ${y}H1014.5`" />
          <path d="M998.5 746V800M1018.5 746V800" />
          <rect x="978.5" y="804.5" width="60" height="14" />
          <path d="M981 804L999 800H1018L1036 804M988 803H1030" />
          <line v-for="(c, i) in cables" :key="i" :x1="c[0]" :y1="c[1]" :x2="c[2]" :y2="c[3]" />
          <g v-for="x in anchors" :key="x">
            <rect :x="x - 3.5" y="734.5" width="8" height="3" />
            <path :d="`M${x + 0.5} 737V746`" />
          </g>
          <path d="M222.5 734V769M230.5 734V769M237.5 746V769" />
          <rect x="210.5" y="769.5" width="39" height="6" />
          <path d="M307.5 734V746M301.5 746V785M313.5 746V785" />
          <rect x="290.5" y="785.5" width="36" height="12" />
          <path d="M385.5 734V746M379.5 746V785M391.5 746V785" />
          <rect x="368.5" y="785.5" width="36" height="12" />
          <path d="M1631.5 734V769M1640.5 734V769M1623.5 746V769" />
          <rect x="1611.5" y="769.5" width="40" height="6" />
          <path d="M153 734L227 768M153 734L183 764M1710 734L1633 768" />
          <path v-for="x in hatchL" :key="x" :d="`M${x} 735l6 9`" />
          <path v-for="x in hatchR" :key="x" :d="`M${x + 6} 735l-6 9`" />
          <rect x="17.5" y="914.5" width="15" height="15" />
          <path d="M33 922.5H101M24.5 914V845" />
          <path d="M101.5 915.5L120 922.5L101.5 929.5Z" fill="#d5d5c8" />
          <path d="M17.5 845.5L24.5 827L31.5 845.5Z" fill="#d5d5c8" />
          <path d="M19.5 792.5L26.5 802L33.5 792.5M26.5 802V812M137.5 913.5L151 933M151 913.5L137.5 933" />
          <text x="971" y="762" class="pier-no" stroke="none" fill="#000">40</text>
          <text x="1025" y="761" class="pier-no" stroke="none" fill="#000">41</text>
        </svg>
        <div class="vpbtns">
          <svg width="12" height="7" viewBox="0 0 12 7"><rect x=".5" y="1.5" width="11" height="4" fill="#ddd" stroke="#666" /></svg>
          <svg width="12" height="12" viewBox="0 0 12 12"><path d="M3 .5h8.5V9H3z" fill="#ccc" stroke="#666" /><path d="M.5 3H9v8.5H.5z" fill="#ddd" stroke="#666" /><path d="M3 6h3.5v3H3z" fill="#aaa" /></svg>
          <svg width="12" height="10" viewBox="0 0 12 10"><path d="M1 1l10 8M11 1L1 9" stroke="#666" stroke-width="3" /><path d="M1 1l10 8M11 1L1 9" stroke="#eee" stroke-width="1" /></svg>
        </div>
      </div>
      <div class="vscroll">
        <span class="sb"><svg width="10" height="8" viewBox="0 0 10 8"><path d="M1 6l4-4 4 4" fill="none" stroke="#2c4f90" stroke-width="2" /></svg></span>
        <span class="vgrow"></span>
        <span class="sb thumb"></span>
        <span class="vgap"></span>
        <span class="sb"><svg width="10" height="8" viewBox="0 0 10 8"><path d="M1 2l4 4 4-4" fill="none" stroke="#2c4f90" stroke-width="2" /></svg></span>
      </div>
    </main>

    <div class="laybar">
      <div class="nav">
        <svg v-for="(p, i) in navBtn" :key="i" width="15" height="16" viewBox="0 0 20 18"><path :d="p" fill="#bbb" stroke="#aaa" stroke-width="2" /></svg>
      </div>
      <div class="ltab active"><span>Модель</span></div>
      <div class="ltab l2"><span>Лист1</span></div>
      <div class="ltab l3"><span>Лист2</span></div>
      <div class="hscroll">
        <span class="sb"><svg width="8" height="10" viewBox="0 0 8 10"><path d="M6 1L2 5l4 4" fill="none" stroke="#2c4f90" stroke-width="2" /></svg></span>
        <span class="hg1"></span>
        <span class="sb thumb"></span>
        <span class="hg2"></span>
        <span class="sb"><svg width="8" height="10" viewBox="0 0 8 10"><path d="M2 1l4 4-4 4" fill="none" stroke="#2c4f90" stroke-width="2" /></svg></span>
      </div>
    </div>
    <div class="divider"></div>

    <section class="command">
      <div class="grip"><span class="dots"></span></div>
      <div class="cmd-main">
        <div class="hist">
          <div>Команда:</div>
          <div>Команда: _QSAVE</div>
        </div>
        <div class="prompt">Команда:</div>
      </div>
      <div class="cmd-side">
        <span class="sb"><svg width="10" height="8" viewBox="0 0 10 8"><path d="M1 6l4-4 4 4" fill="none" stroke="#2c4f90" stroke-width="2" /></svg></span>
        <span class="sb"><svg width="10" height="8" viewBox="0 0 10 8"><path d="M1 2l4 4 4-4" fill="none" stroke="#2c4f90" stroke-width="2" /></svg></span>
      </div>
      <div class="cmd-h">
        <span class="sb"><svg width="8" height="10" viewBox="0 0 8 10"><path d="M6 1L2 5l4 4" fill="none" stroke="#2c4f90" stroke-width="2" /></svg></span>
        <span class="sb thumb"></span>
        <span class="hgrow"></span>
        <span class="sb"><svg width="8" height="10" viewBox="0 0 8 10"><path d="M2 1l4 4-4 4" fill="none" stroke="#2c4f90" stroke-width="2" /></svg></span>
        <span class="corner"></span>
      </div>
    </section>

    <footer class="status">
      <div class="coords">1898687.3254, -303058.3328, 0.0000</div>
      <div class="sgroup">
        <span v-for="s in statusLeft" :key="s[0]" class="st" :class="{ act: s[1] }"><svg class="ic s18" viewBox="0 0 20 20" v-html="D[s[0]]"></svg></span>
      </div>
      <div class="sgrow"></div>
      <div class="st model">МОДЕЛЬ</div>
      <span class="st w22"><svg class="ic s18" viewBox="0 0 20 20" v-html="D.spaper"></svg></span>
      <span class="st w22"><svg class="ic s18" viewBox="0 0 20 20" v-html="D.sviews"></svg></span>
      <span class="sgap g12"></span>
      <span class="st w22"><svg class="ic s18" viewBox="0 0 20 20" v-html="D.span2"></svg></span>
      <span class="st w22"><svg class="ic s18" viewBox="0 0 20 20" v-html="D.szoom"></svg></span>
      <span class="st w22"><svg class="ic s18" viewBox="0 0 20 20" v-html="D.swheel"></svg></span>
      <span class="st w22"><svg class="ic s18" viewBox="0 0 20 20" v-html="D.sshow"></svg></span>
      <span class="sgap g12"></span>
      <span class="st w51"><svg class="ic s18" viewBox="0 0 20 20" v-html="D.sanno"></svg><b>1:1</b><i class="tri dk"></i></span>
      <span class="st w22"><svg class="ic s18" viewBox="0 0 20 20" v-html="D.sanno2"></svg></span>
      <span class="st w22"><svg class="ic s18" viewBox="0 0 20 20" v-html="D.sanno3"></svg></span>
      <span class="sgap g6"></span>
      <span class="st wsp"><svg class="ic s18" viewBox="0 0 20 20" v-html="D.gear"></svg><b>2D рисование и аннотации</b><i class="tri dk"></i></span>
      <span class="st w22"><svg class="ic s18" viewBox="0 0 20 20" v-html="D.lock2"></svg></span>
      <span class="st cui"><svg class="ic s18" viewBox="0 0 20 20" v-html="D.cui"></svg></span>
      <span class="st w11"><i class="tri dk"></i></span>
      <span class="st w22"><svg class="ic s18" viewBox="0 0 20 20" v-html="D.win"></svg></span>
    </footer>

    <footer class="taskbar">
      <div class="start">
        <svg class="ic s15" viewBox="0 0 20 20" v-html="D.flag"></svg>
        <span>пуск</span>
      </div>
      <div class="tasks">
        <div v-for="t in tasks" :key="t.t" class="task" :class="{ on: t.on }">
          <svg class="ic s18" viewBox="0 0 20 20" v-html="D[t.i]"></svg>
          <span>{{ t.t }}</span>
        </div>
      </div>
      <div class="tray">
        <span class="lang">EN</span>
        <span class="chev"><svg width="8" height="10" viewBox="0 0 8 10"><path d="M6 1L2 5l4 4" fill="none" stroke="#fff" stroke-width="2" /></svg></span>
        <div class="tray-in">
          <svg width="16" height="18" viewBox="0 0 16 18"><path d="M0 0l3 2h10l3-2v10c0 4-4 6-8 8-4-2-8-4-8-8z" fill="#c81e2c" /><path d="M11 6a4 4 0 1 0 0 6" fill="none" stroke="#fff" stroke-width="2.4" /></svg>
          <span class="clock">21:00</span>
        </div>
      </div>
    </footer>
  </div>
</template>

<style scoped>
.app { position: relative; width: 1920px; height: 1080px; overflow: hidden; display: flex; flex-direction: column; font-family: "Liberation Sans", sans-serif; font-size: 11px; color: #333; background: #666; }
.ic { display: block; width: 20px; height: 20px; fill: none; stroke: #333; stroke-width: 1; flex: none; }
i { display: inline-block; font-style: normal; }
.tri { width: 0; height: 0; border-left: 4px solid transparent; border-right: 4px solid transparent; border-top: 4px solid #444; }
.tri.small { border-left-width: 2.5px; border-right-width: 2.5px; border-top-width: 3px; }
.tri.d { border-top-color: #444; }
.tri.g { border-top-color: #666; }
.tri.white { border-top-color: #333; }
.tri.dk { border-top-color: #111; }

.appbtn { position: absolute; left: 0; top: 0; z-index: 5; width: 41px; height: 43px; box-sizing: border-box; border: 1px solid #2a2a2a; background: linear-gradient(#a8a8a8, #c4c4c4 50%, #8b8b8b); display: flex; align-items: center; padding-left: 3px; }
.appcaret { position: absolute; right: 3px; top: 19px; }

.titlebar { height: 26px; box-sizing: border-box; padding-left: 41px; display: flex; align-items: flex-start; background: repeating-linear-gradient(135deg, #a7a7a7 0 1px, #9f9f9f 1px 3px); border-bottom: 1px solid #151515; }
.qat { height: 23px; width: 175px; box-sizing: border-box; margin-top: 2px; border: 1px solid #555; border-left: 0; background: #9d9d9d; display: flex; align-items: center; gap: 6px; padding-left: 8px; }
.q { width: 16px; height: 16px; }
.qat .tri { margin: 0 1px 0 0; }
.qmore { width: 7px; height: 6px; border-top: 1px solid #111; position: relative; }
.qmore::after { content: ""; position: absolute; left: 0; top: 2px; border-left: 3.5px solid transparent; border-right: 3.5px solid transparent; border-top: 4px solid #111; }
.title { width: 1308px; box-sizing: border-box; padding-left: 541px; height: 25px; display: flex; align-items: center; gap: 16px; font-family: "DejaVu Sans", sans-serif; font-size: 12px; color: #fff; -webkit-text-stroke: .2px #fff; }
.title span:last-child { letter-spacing: -.1px; }
.search { width: 328px; height: 24px; box-sizing: border-box; border: 1px solid #555; margin-top: 1px; background: #9a9a9a; display: flex; align-items: center; padding-left: 5px; gap: 6px; }
.tri-r { width: 0; height: 0; border-top: 4px solid transparent; border-bottom: 4px solid transparent; border-left: 4px solid #111; }
.input { width: 179px; height: 20px; background: #f2f2f2; font-style: italic; font-size: 11px; line-height: 20px; padding-left: 3px; box-sizing: border-box; color: #666; margin-left: -2px; white-space: nowrap; overflow: hidden; }
.s { width: 16px; height: 16px; }
.search .tri { margin: 0 1px; }
.winbtns { display: flex; gap: 7px; align-items: center; height: 25px; margin-left: 19px; }
.wmin { margin-right: -3px; }

.tabs { height: 20px; background: #3f3f3f; display: flex; align-items: flex-end; padding-left: 46px; color: #fff; font-size: 10.8px; }
.tab { height: 17px; line-height: 17px; white-space: nowrap; color: #f4f4f4; }
.tab.on { width: 59px; box-sizing: border-box; text-align: center; background: linear-gradient(#fff, #ececec); color: #333; border-radius: 2px 2px 0 0; }
.t1 { margin-left: 11px; width: 59.5px; }
.t2 { width: 74.5px; }
.t3 { width: 105px; }
.t4 { width: 38px; }
.t5 { width: 80px; }
.t6 { width: 64px; }
.pill { width: 13px; height: 8px; background: #ddd; border-radius: 4px; margin-bottom: 5px; display: flex; align-items: center; justify-content: center; }

.ribbon { height: 99px; box-sizing: border-box; border-top: 1px solid #f4f4f4; border-bottom: 1px solid #f4f4f4; background: linear-gradient(#d4d4d4, #8d8d8d); display: flex; padding-left: 2px; }
.ribbon-sep { height: 6px; background: #686868; border-bottom: 1px solid #a29c86; box-sizing: border-box; }
.panel { box-sizing: border-box; display: flex; flex-direction: column; border-right: 1px solid #a9a9a9; background: linear-gradient(#ececec, #fbfbfb 70%); }
.p1 { width: 120px; }
.p2 { width: 179px; }
.p3 { width: 206px; }
.p4 { width: 222px; }
.p5 { width: 226px; }
.p6 { width: 206px; }
.p7 { width: 102px; }
.p8 { width: 94px; border-right: 0; }
.body { height: 77px; box-sizing: border-box; padding-top: 4px; display: flex; }
.body.stack { flex-direction: column; gap: 3px; padding-left: 2px; }
.ptitle { position: relative; height: 20px; box-sizing: border-box; background: linear-gradient(#ececec, #e0e0e0); border-top: 1px solid #cfcfcf; line-height: 17px; text-align: center; font-size: 10.8px; color: #444; }
.pad24 { padding-right: 14px; }
.ptitle .tri { margin-left: 3px; vertical-align: 0; }
.launch { position: absolute; right: 4px; top: 3px; font-size: 9px; color: #666; }

.big { display: flex; flex-direction: column; align-items: center; flex: none; }
.bigicon { height: 38px; display: block; flex: none; }
.biglabel { line-height: 13px; white-space: nowrap; color: #444; font-size: 10.8px; text-align: center; }
.biglabel.two { line-height: 14px; }
.biga { height: 38px; line-height: 38px; font-size: 38px; color: #444; }
.w58 { width: 59px; }
.w70 { width: 71px; }
.w106 { width: 107px; position: relative; }
.w64 { width: 64px; }
.w76 { width: 76px; }
.w69 { width: 69px; }
.big > .tri { margin-top: 5px; }
.mt-a { position: absolute; left: 96px; top: 60px; margin: 0 !important; }

.col { display: flex; flex-direction: column; gap: 3px; }
.ml4 { margin-left: 4px; }
.ml2 { margin-left: 2px; }
.split { display: flex; height: 21px; background: #f0f0f0; border: 1px solid #d4d4d4; box-sizing: border-box; width: 32px; }
.split .ib { border: 0; border-right: 1px solid #d4d4d4; background: none; width: 22px; height: 19px; }
.ar { flex: 1; display: flex; align-items: center; justify-content: center; }
.ib { display: flex; align-items: center; justify-content: center; box-sizing: border-box; width: 23px; height: 21px; background: #f0f0f0; }
.ib .ic { width: 17px; height: 17px; }
.solo { width: 22px; border: 1px solid #d4d4d4; }
.flat { border: 1px solid #d6d6d6; margin-left: -1px; }
.lay { border: 1px solid #d6d6d6; }
.g3 { display: grid; grid-template-columns: repeat(3, 23px); grid-auto-rows: 21px; row-gap: 3px; }

.lrow { display: flex; gap: 4px; height: 21px; }
.lgrp { display: flex; }
.combo { position: relative; display: flex; align-items: center; height: 21px; box-sizing: border-box; border: 1px solid #d4d4d4; background: linear-gradient(#f6f6f6, #ebebeb); padding-left: 3px; gap: 3px; }
.combo > .tri { position: absolute; right: 2px; top: 7px; }
.w200 { width: 200px; }
.w179 { width: 179px; margin-left: 1px; }
.ctext { width: 184px; overflow: hidden; white-space: nowrap; font-size: 11px; color: #444; }
.ctext.z { margin-left: 4px; width: 30px; }
.ctext.t { width: 60px; }
.s16 { width: 16px; height: 16px; }
.swatch { width: 16px; height: 15px; background: #000; flex: none; }
.swatch.sm { width: 14px; height: 14px; margin-left: 4px; }
.prow { display: flex; gap: 2px; height: 21px; align-items: center; padding-left: 2px; }
.lw { width: 64px; flex: none; margin-left: 1px; }
.lw.black { height: 2px; background: #000; }
.lw.graya { height: 2px; background: #777; margin-left: 6px; width: 59px; }

.rows { display: flex; flex-direction: column; gap: 3px; }
.trow { display: flex; align-items: center; gap: 2px; height: 21px; white-space: nowrap; font-size: 10.8px; color: #444; }
.trow.wide { gap: 5px; }
.gap8 { margin-left: 7px; }

.palette { position: absolute; left: 3px; top: 79px; z-index: 6; width: 23px; height: 383px; box-sizing: border-box; background: #c9c9c9; border: 1px solid #555; border-radius: 4px; display: flex; flex-direction: column; align-items: center; gap: 8px; padding: 3px 0 3px; }
.pal-grow { flex: 1; }
.pal-text { writing-mode: vertical-rl; transform: rotate(180deg); font-family: "DejaVu Sans", sans-serif; font-weight: bold; font-size: 11px; color: #111; line-height: 14px; letter-spacing: .2px; }
.pal-ic { width: 15px; height: 15px; }

.canvas { height: 797px; display: flex; border-left: 2px solid #8a8a7a; box-sizing: border-box; background: #fffdf2; }
.drawing { position: relative; width: 1900px; height: 797px; flex: none; }
.dwg { position: absolute; left: 0; top: 0; }
.pier-no { font: bold 18px "Liberation Sans", sans-serif; }
.vpbtns { position: absolute; left: 1838px; top: 9px; display: flex; align-items: center; gap: 8px; }
.vscroll { width: 18px; display: flex; flex-direction: column; background: linear-gradient(90deg, #f4f4f0, #fff); padding: 2px 1px 0; box-sizing: border-box; align-items: center; }
.vgrow { height: 736px; }
.vgap { flex: 1; }
.vscroll .sb { height: 16px; width: 15px; }
.vscroll .thumb { height: 14px; }
.sb { display: flex; align-items: center; justify-content: center; box-sizing: border-box; width: 15px; height: 16px; background: linear-gradient(#d3def8, #b8cbf5); border: 1px solid #eef3fd; border-radius: 2px; flex: none; }
.thumb { background: linear-gradient(90deg, #c3d3f6 0 20%, #a9bdea 20% 30%, #c3d3f6 30% 40%, #a9bdea 40% 50%, #c3d3f6 50% 60%, #a9bdea 60% 70%, #c3d3f6 70%); }

.laybar { height: 18px; box-sizing: border-box; display: flex; background: #ece9d8; border-top: 1px solid #85827a; }
.nav { width: 62px; display: flex; padding-left: 2px; align-items: center; box-sizing: border-box; }
.ltab { position: relative; display: flex; align-items: center; justify-content: center; font-size: 11.3px; color: #111; height: 17px; flex: none; }
.ltab.active { width: 62px; background: #f7f5ea; clip-path: polygon(0 0, 100% 0, 93% 100%, 7% 100%); }
.ltab::after { content: ""; position: absolute; right: 2px; top: 1px; width: 1px; height: 16px; background: #555; transform: skewX(-22deg); }
.ltab.active::before { content: ""; position: absolute; left: 2px; top: 1px; width: 1px; height: 16px; background: #555; transform: skewX(22deg); }
.l2 { width: 44px; }
.l3 { width: 50px; }
.hscroll { margin-left: 1038px; width: 646px; padding-left: 6px; height: 17px; display: flex; align-items: center; background: linear-gradient(#f7f7f4, #fff); box-sizing: border-box; }
.hg1 { width: 379px; }
.hg2 { flex: 1; }
.hscroll .thumb { width: 16px; }

.divider { height: 4px; background: #666; }

.command { position: relative; height: 58px; background: #fff; display: flex; box-sizing: border-box; }
.grip { width: 16px; background: #a9a9a9; padding: 3px 2px; box-sizing: border-box; }
.dots { display: block; height: 3px; border-top: 1px dotted #333; border-bottom: 1px dotted #333; }
.cmd-main { flex: 1; font: 13px/17px "Liberation Mono", monospace; color: #222; padding-left: 2px; }
.hist { height: 39px; box-sizing: border-box; border-bottom: 1px solid #aaa9a0; }
.prompt { line-height: 23px; }
.cmd-side { position: absolute; right: 2px; top: 2px; display: flex; flex-direction: column; gap: 6px; }
.cmd-h { position: absolute; right: 0; bottom: 0; width: 82px; height: 18px; display: flex; align-items: center; gap: 1px; }
.cmd-h .hgrow { flex: 1; }
.corner { width: 16px; height: 18px; background: #ece9d8; }

.status { height: 22px; box-sizing: border-box; border-top: 1px solid #111; display: flex; align-items: stretch; background: linear-gradient(#9a9a9a, #8a8a8a 50%, #9a9a9a); color: #111; font-size: 11px; }
.coords { width: 221px; box-sizing: border-box; padding-left: 12px; line-height: 21px; white-space: nowrap; font-size: 10.8px; }
.sgroup { display: flex; }
.st { display: flex; align-items: center; justify-content: center; width: 22px; box-sizing: border-box; background: linear-gradient(#bcbcbc, #a8a8a8); border-right: 1px solid #777; }
.st.act { background: linear-gradient(#bfe2ea 0, #d8ecf0 45%, #a6ccd8 55%, #b8dbe4); }
.s18 { width: 18px; height: 18px; }
.s15 { width: 15px; height: 15px; }
.sgrow { flex: 1; }
.model { width: 53px; font-size: 12px; }
.w22 { width: 22px; }
.sgap { background: #7c7c7c; }
.g12 { width: 12px; }
.g6 { width: 6px; }
.w51 { width: 51px; gap: 3px; }
.wsp { width: 172px; gap: 1px; justify-content: flex-start; padding-left: 3px; }
.st b { font-weight: normal; white-space: nowrap; }
.cui { width: 30px; background: #8c8c8c; }
.w11 { width: 12px; }
.status > .st:last-child { width: 23px; margin-right: 3px; border-right: 0; }

.taskbar { height: 30px; display: flex; align-items: stretch; background: linear-gradient(#2f6de4 0, #3f83ee 8%, #2258d6 20%, #2258d6 85%, #1c46b0); color: #fff; }
.start { width: 87px; box-sizing: border-box; padding-left: 11px; display: flex; align-items: center; gap: 1px; background: linear-gradient(#3f9b3f, #4cab4c 12%, #3a8e3a 50%, #317c31); border-radius: 0 10px 10px 0; font: italic bold 16px "Liberation Sans", sans-serif; text-shadow: 1px 1px 1px #1c3f1c; }
.tasks { display: flex; gap: 2px; margin-left: 10px; padding: 2px 0; }
.task { width: 158px; box-sizing: border-box; display: flex; align-items: center; gap: 3px; padding-left: 6px; border-radius: 2px; background: linear-gradient(#4a8cf5, #3a7cf0 20%, #3a7cf0); font-size: 11.5px; white-space: nowrap; }
.task.on { background: #1e4fb8; }
.tray { margin-left: auto; display: flex; align-items: center; font-size: 11.5px; }
.lang { margin-right: 5px; background: #2a66c8; padding: 4px 1px; }
.chev { width: 14px; height: 18px; border-radius: 50%; background: #3f90f0; border: 1px solid #cde; display: flex; align-items: center; justify-content: center; box-sizing: border-box; z-index: 1; margin-right: -6px; }
.tray-in { width: 75px; height: 100%; box-sizing: border-box; display: flex; align-items: center; padding-left: 13px; gap: 6px; background: linear-gradient(#1a8fe8, #119ce8 15%, #0f8fdf 85%, #0f6ec0); }
.clock { white-space: nowrap; }
</style>
